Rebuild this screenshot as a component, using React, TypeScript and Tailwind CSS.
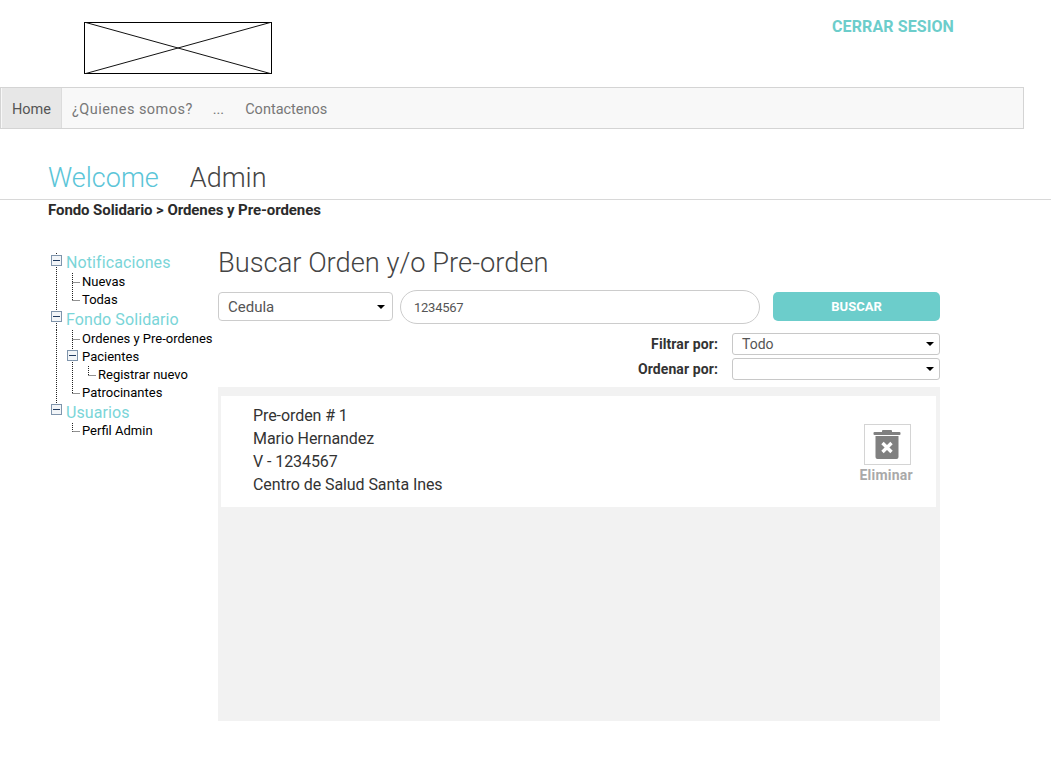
type Cell = "none" | "I" | "T" | "L" | "boxI" | "boxEnd";

function TreeCell({ kind, h }: { kind: Cell; h: number }) {
  const mid = Math.floor(h / 2) + 0.5;
  const isBox = kind.startsWith("box");
  const boxY = 2;
  return (
    <svg width="16" height={h} className="shrink-0 block">
      {kind !== "none" && !isBox && (
        <line x1="8.5" y1="0" x2="8.5" y2={kind === "L" ? mid : h} stroke="#222" strokeDasharray="1 1" />
      )}
      {(kind === "T" || kind === "L") && (
        <line x1="8.5" y1={mid} x2="16" y2={mid} stroke="#222" strokeDasharray="1 1" />
      )}
      {isBox && (
        <>
          {kind !== "boxEnd" ? (
            <line x1="8.5" y1="0" x2="8.5" y2={h} stroke="#222" strokeDasharray="1 1" />
          ) : (
            <line x1="8.5" y1="0" x2="8.5" y2="3" stroke="#222" strokeDasharray="1 1" />
          )}
          <rect x="3.5" y={boxY + 0.5} width="10" height="10" fill="#f2f5f8" stroke="#7f94ab" />
          <line x1="5" y1={boxY + 5.5} x2="12" y2={boxY + 5.5} stroke="#1f3a5f" />
        </>
      )}
    </svg>
  );
}

function TreeRow({ cells, label, root, h }: { cells: Cell[]; label: string; root?: boolean; h: number }) {
  return (
    <div className="flex items-center" style={{ height: h }}>
      {cells.map((c, i) => (
        <TreeCell key={i} kind={c} h={h} />
      ))}
      <span
        className={
          root
            ? "pl-[2px] text-[16px] leading-[20px] tracking-[0.1px] text-[#7ad5d8] whitespace-nowrap"
            : "pl-[2px] text-[13px] leading-[18px] text-black whitespace-nowrap"
        }
      >
        {label}
      </span>
    </div>
  );
}

function Sidebar() {
  return (
    <div className="w-[170px] ml-[48px] pt-[34px] shrink-0">
      <TreeRow h={20} root label="Notificaciones" cells={["boxI"]} />
      <TreeRow h={18} label="Nuevas" cells={["I", "T"]} />
      <TreeRow h={18} label="Todas" cells={["I", "L"]} />
      <TreeRow h={21} root label="Fondo Solidario" cells={["boxI"]} />
      <TreeRow h={18} label="Ordenes y Pre-ordenes" cells={["I", "T"]} />
      <TreeRow h={18} label="Pacientes" cells={["I", "boxI"]} />
      <TreeRow h={18} label="Registrar nuevo" cells={["I", "I", "L"]} />
      <TreeRow h={18} label="Patrocinantes" cells={["I", "L"]} />
      <TreeRow h={21} root label="Usuarios" cells={["boxEnd"]} />
      <TreeRow h={16} label="Perfil Admin" cells={["none", "L"]} />
    </div>
  );
}

function Caret() {
  return <span className="w-0 h-0 border-x-[4px] border-x-transparent border-t-[4px] border-t-black" />;
}

function FilterRow({ label, value }: { label: string; value: string }) {
  return (
    <div className="flex items-center justify-end">
      <span className="mr-[14px] text-[14px] tracking-[0.1px] font-bold text-[#333]">{label}</span>
      <div className="flex items-center justify-between w-[208px] h-[22px] pl-[9px] pr-[5px] rounded-[3px] border border-[#c8c8c8] text-[14px] text-[#555]">
        <span>{value}</span>
        <Caret />
      </div>
    </div>
  );
}

function TrashIcon() {
  return (
    <svg width="28" height="30" viewBox="0 0 28 30" fill="#808080">
      <rect x="9" y="0" width="10" height="3" rx="1" />
      <rect x="0.5" y="2" width="27" height="3" rx="1" />
      <path d="M2.5 6h23v21a2 2 0 0 1-2 2h-19a2 2 0 0 1-2-2z" />
      <path d="M9.5 13l9 9M18.5 13l-9 9" fill="none" stroke="#fff" strokeWidth="3.4" />
    </svg>
  );
}

export default function App() {
  return (
    <div className="min-h-[784px] bg-white font-['Roboto',sans-serif] text-[#333]">
      <header className="flex items-start justify-between h-[87px] pl-[84px] pr-[97px]">
        <svg width="188" height="52" className="mt-[22px] block">
          <rect x="0.5" y="0.5" width="187" height="51" fill="none" stroke="#000" />
          <line x1="0" y1="0" x2="188" y2="52" stroke="#111" />
          <line x1="188" y1="0" x2="0" y2="52" stroke="#111" />
        </svg>
        <a className="mt-[17px] text-[16px] leading-[20px] tracking-[0.1px] font-bold text-[#6ccdcb]">CERRAR SESION</a>
      </header>

      <nav className="flex w-[1024px] h-[42px] border border-[#d4d4d4] bg-[#f8f8f8] text-[14.5px] text-[#777]">
        <a className="flex items-center ml-[1px] px-[10px] pt-[4px] bg-[#e7e7e7] border-r border-[#dcdcdc] text-[#555]">Home</a>
        <a className="flex items-center px-[10px] pt-[4px] tracking-[0.45px]">¿Quienes somos?</a>
        <a className="flex items-center px-[10px] pt-[4px]">...</a>
        <a className="flex items-center ml-[1px] px-[10px] pt-[4px]">Contactenos</a>
      </nav>

      <div className="flex items-center gap-[31px] h-[71px] pt-[29px] pl-[48px] border-b border-[#d8d8d8] text-[27px] font-light">
        <span className="text-[#5bc5d8]">Welcome</span>
        <span className="text-[#444]">Admin</span>
      </div>
      <div className="pl-[48px] pt-[1px] text-[15px] leading-[18px] tracking-[-0.08px] font-bold text-[#2b2b2b]">
        Fondo Solidario &gt; Ordenes y Pre-ordenes
      </div>

      <main className="flex">
        <Sidebar />
        <section className="w-[722px] pt-[28px]">
          <h1 className="text-[27.3px] leading-[32px] font-light text-[#444]">Buscar Orden y/o Pre-orden</h1>
          <div className="flex items-center mt-[11px] h-[34px]">
            <div className="flex items-center justify-between w-[175px] h-[29px] mb-[1px] pl-[9px] pr-[7px] rounded-[4px] border border-[#cccccc] text-[15px] text-[#555]">
              <span className="pt-[2px]">Cedula</span>
              <Caret />
            </div>
            <input
              readOnly
              value="1234567"
              className="w-[360px] h-[34px] ml-[7px] px-[13px] rounded-[17px] border border-[#cccccc] text-[13px] tracking-[-0.25px] text-[#555] outline-none"
            />
            <button className="w-[167px] h-[29px] mb-[1px] ml-[13px] rounded-[5px] bg-[#6ccdcb] text-[13px] font-bold text-white">
              BUSCAR
            </button>
          </div>
          <div className="flex flex-col gap-[3px] mt-[9px]">
            <FilterRow label="Filtrar por:" value="Todo" />
            <FilterRow label="Ordenar por:" value="" />
          </div>
          <div className="h-[334px] mt-[7px] pl-[3px] pr-[4px] pt-[9px] bg-[#f2f2f2]">
            <div className="flex items-start justify-between h-[111px] bg-white pl-[32px] pr-[23px] pt-[8px]">
              <div className="text-[16px] leading-[23px] tracking-[-0.08px] text-[#333]">
                <div>Pre-orden # 1</div>
                <div>Mario Hernandez</div>
                <div>V - 1234567</div>
                <div>Centro de Salud Santa Ines</div>
              </div>
              <div className="flex flex-col items-center mt-[20px]">
                <div className="flex items-center justify-center w-[47px] h-[41px] ml-[2px] border border-[#d4d4d4]">
                  <TrashIcon />
                </div>
                <span className="mt-[1px] text-[14px] leading-[18px] tracking-[0.25px] font-bold text-[#a9a9a9]">Eliminar</span>
              </div>
            </div>
          </div>
        </section>
      </main>
    </div>
  );
}
